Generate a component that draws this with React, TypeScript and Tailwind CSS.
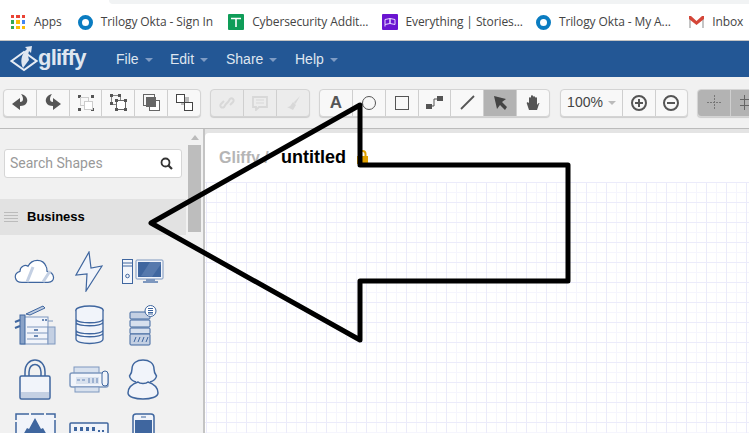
import type { ReactNode } from "react";

const ui = "font-['Liberation_Sans',Arial,sans-serif]";

function OktaRing() {
  return <span className="h-[15px] w-[15px] shrink-0 rounded-full border-[4px] border-[#0a7cc1] bg-white" />;
}

function Bookmark({ icon, label, width }: { icon: ReactNode; label: string; width: string }) {
  return (
    <div className={`flex items-center gap-[8px] ${width}`}>
      {icon}
      <span className="whitespace-nowrap text-[12px] tracking-[-0.1px] text-[#444]">{label}</span>
    </div>
  );
}

function AppsIcon() {
  const colors = ["#ea4335", "#ea4335", "#ea4335", "#34a853", "#fbbc05", "#4285f4", "#34a853", "#fbbc05", "#fbbc05"];
  return (
    <span className="mr-px grid h-[14px] w-[14px] shrink-0 grid-cols-3 gap-[2px]">
      {colors.map((c, i) => (
        <span key={i} style={{ backgroundColor: c }} />
      ))}
    </span>
  );
}

function BookmarksBar() {
  return (
    <div className="relative flex h-[41px] items-center border-b border-[#c4c4c4] bg-white pl-[11px] pt-[4px] font-['Open_Sans',sans-serif]">
      <div className="absolute right-0 top-0 h-[4px] w-[640px] rounded-bl-[8px] bg-[#f1f3f4]" />
      <Bookmark width="w-[67px]" icon={<AppsIcon />} label="Apps" />
      <Bookmark width="w-[151px]" icon={<OktaRing />} label="Trilogy Okta - Sign In" />
      <Bookmark
        width="w-[154px]"
        icon={
          <svg width="16" height="16" viewBox="0 0 16 16" className="shrink-0">
            <rect width="16" height="16" rx="1" fill="#0f9d58" />
            <path d="M3 4.500h10M8 4.500V13" stroke="#fff" strokeWidth="1.600" />
          </svg>
        }
        label="Cybersecurity Addit..."
      />
      <Bookmark
        width="w-[155px]"
        icon={
          <svg width="16" height="16" viewBox="0 0 16 16" className="shrink-0">
            <rect width="16" height="16" rx="1" fill="#6a14d1" />
            <path d="M3 5.500l5-1v5l-5 1zM8 4.500l5 1v5l-5-1zM3 10.500v2" fill="none" stroke="#e8d8ff" strokeWidth="1" />
          </svg>
        }
        label="Everything | Stories..."
      />
      <Bookmark width="w-[154px]" icon={<OktaRing />} label="Trilogy Okta - My A..." />
      <Bookmark
        width="w-[60px]"
        icon={
          <svg width="15" height="12" viewBox="0 0 15 12" className="shrink-0">
            <path d="M0 1h2v11H0zM13 1h2v11h-2z" fill="#c5c5c5" />
            <path d="M0 0h2l5.500 5L13 0h2v3L7.500 9 0 3z" fill="#d44638" />
          </svg>
        }
        label="Inbox"
      />
    </div>
  );
}

function MenuItem({ label, width }: { label: string; width: string }) {
  return (
    <div className={`flex items-center gap-[6px] ${width}`}>
      <span className="text-[14px] text-[#dfe6f0]">{label}</span>
      <span className="mt-[1px] h-0 w-0 border-x-[4px] border-t-[4px] border-x-transparent border-t-[#7f9cc4]" />
    </div>
  );
}

function BlueBar() {
  return (
    <div className={`flex h-[36px] items-center bg-[#235795] pl-[10px] ${ui}`}>
      <svg width="28" height="28" viewBox="0 0 28 28" className="mb-[2px] shrink-0">
        <path d="M1.500 17L14 8l12.500 9L14 26z" fill="#235795" stroke="#e6ecf4" strokeWidth="2" />
        <path d="M13 24c-3-6-2-14 4-19l-2-2 7-1-1 7-2-2c-1 3-1 6 0 9z" fill="#dfe6f0" />
      </svg>
      <span className="w-[78px] pb-[2px] text-[22px] font-bold leading-none tracking-[-0.8px] text-[#dfe6f0]">gliffy</span>
      <MenuItem width="w-[54px]" label="File" />
      <MenuItem width="w-[56px]" label="Edit" />
      <MenuItem width="w-[69px]" label="Share" />
      <MenuItem width="w-[60px]" label="Help" />
    </div>
  );
}

function ToolButton({ children, active, width = "flex-1" }: { children: ReactNode; active?: boolean; width?: string }) {
  return (
    <div
      className={`flex h-full items-center justify-center border-r border-[#cfcfcf] last:border-r-0 ${width} ${active ? "bg-[#b3b3b3]" : ""}`}
    >
      {children}
    </div>
  );
}

function ToolGroup({ children, dim, className = "" }: { children: ReactNode; dim?: boolean; className?: string }) {
  return (
    <div
      className={`flex h-[28px] shrink-0 overflow-hidden rounded-[4px] border border-[#d4d4d4] ${dim ? "bg-[#ececec]" : "bg-[#f8f8f8]"} shadow-[0_1px_1px_rgba(0,0,0,0.15)] ${className}`}
    >
      {children}
    </div>
  );
}

const ic = "#555";
const dimIc = "#d8d8d8";

function Toolbar() {
  return (
    <div className="relative z-10 flex h-[52px] items-center gap-[9px] overflow-hidden bg-[#f1f1f1] pb-[1px] pl-[3px] shadow-[inset_0_-1px_0_#bbb]">
      <ToolGroup className="w-[198px]">
        <ToolButton>
          <svg width="16" height="17" viewBox="0 0 16 17"><path d="M9 0c5 1 7 5 6 8-1 3-4 4-7 4v4L0 10l8-6v4c2 0 3-1 3-3 0-2-1-4-2-5z" fill={ic} /></svg>
        </ToolButton>
        <ToolButton>
          <svg width="16" height="17" viewBox="0 0 16 17"><path d="M7 0C2 1 0 5 1 8c1 3 4 4 7 4v4l8-6-8-6v4C6 8 5 7 5 5c0-2 1-4 2-5z" fill={ic} /></svg>
        </ToolButton>
        <ToolButton>
          <svg width="16" height="16" viewBox="0 0 16 16"><path d="M0 0h3v3H0zM13 0h3v3h-3zM0 13h3v3H0zM13 13h3v3h-3z" fill={ic} /><rect x="2.500" y="2.500" width="8" height="8" fill="none" stroke="#ccc" /><rect x="6.500" y="6.500" width="8" height="8" fill="#fff" stroke="#ccc" /></svg>
        </ToolButton>
        <ToolButton>
          <svg width="17" height="17" viewBox="0 0 17 17"><rect x="1.500" y="1.500" width="9" height="9" fill="none" stroke="#888" /><rect x="6.500" y="6.500" width="9" height="9" fill="#fff" stroke="#666" /><path d="M0 0h3v3H0zM8 0h3v3H8zM0 8h3v3H0zM5 5h3v3H5zM14 5h3v3h-3zM14 14h3v3h-3zM5 14h3v3H5z" fill={ic} /></svg>
        </ToolButton>
        <ToolButton>
          <svg width="17" height="17" viewBox="0 0 17 17"><rect x="0.500" y="0.500" width="11" height="11" fill="none" stroke="#666" /><rect x="6.500" y="6.500" width="10" height="10" fill="#fff" stroke="#666" /><rect x="3" y="3" width="10" height="10" fill="#666" /></svg>
        </ToolButton>
        <ToolButton>
          <svg width="17" height="17" viewBox="0 0 17 17"><rect x="5" y="3" width="8" height="8" fill="#bbb" /><rect x="9" y="3" width="4" height="6" fill="#bbb" /><rect x="0.500" y="0.500" width="8" height="8" fill="#fff" stroke="#444" /><rect x="8.500" y="8.500" width="8" height="8" fill="#fff" stroke="#444" /></svg>
        </ToolButton>
      </ToolGroup>
      <ToolGroup dim className="w-[100px]">
        <ToolButton>
          <svg width="16" height="16" viewBox="0 0 16 16"><path d="M7 9l-2 3a2 2 0 01-3-3l3-3M9 7l2-3a2 2 0 013 3l-3 3M6 10l4-4" stroke={dimIc} strokeWidth="2" fill="none" /></svg>
        </ToolButton>
        <ToolButton>
          <svg width="16" height="16" viewBox="0 0 16 16"><path d="M1 2h14v10H7l-3 3v-3H1z" fill="none" stroke={dimIc} strokeWidth="1.800" /><path d="M4 5h8M4 8h8" stroke={dimIc} /></svg>
        </ToolButton>
        <ToolButton>
          <svg width="16" height="16" viewBox="0 0 16 16"><path d="M15 1L9 7l1 2 1-1zM8 7l3 3-3 5-6-3c3 0 4-2 6-5z" fill={dimIc} /></svg>
        </ToolButton>
      </ToolGroup>
      <ToolGroup className="w-[231px]">
        <ToolButton>
          <span className={`text-[17px] font-bold leading-none text-[#555] ${ui}`}>A</span>
        </ToolButton>
        <ToolButton>
          <span className="h-[14px] w-[14px] rounded-full border-[1.5px] border-[#555]" />
        </ToolButton>
        <ToolButton>
          <span className="h-[14px] w-[14px] border-[1.5px] border-[#555]" />
        </ToolButton>
        <ToolButton>
          <svg width="17" height="13" viewBox="0 0 17 13"><path d="M0 8h6v5H0zM11 0h6v5h-6z" fill={ic} /><path d="M5 10h3V3h4" stroke={ic} fill="none" /></svg>
        </ToolButton>
        <ToolButton>
          <svg width="15" height="15" viewBox="0 0 15 15"><path d="M1 14L14 1" stroke={ic} strokeWidth="1.800" /></svg>
        </ToolButton>
        <ToolButton active>
          <svg width="13" height="14" viewBox="0 0 13 14"><path d="M0 0l12 3-4 3 5 5-2 3-5-5-3 4z" fill="#444" /></svg>
        </ToolButton>
        <ToolButton>
          <svg width="14" height="16" viewBox="0 0 14 16"><path d="M3 15L1 9c-1-2 1-2 2-1V3c0-1 2-1 2 0V1c0-1 2-1 2 0v1c0-1 2-1 2 0v1c0-1 2-1 2 0v7c2-3 3-2 2-1l-2 6z" fill={ic} /></svg>
        </ToolButton>
      </ToolGroup>
      <ToolGroup className="ml-px w-[128px]">
        <ToolButton width="w-[62px] shrink-0">
          <span className={`text-[14px] text-[#444] ${ui}`}>100%</span>
          <span className="ml-[5px] h-0 w-0 border-x-[4px] border-t-[4px] border-x-transparent border-t-[#bbb]" />
        </ToolButton>
        <ToolButton>
          <span className="relative h-[16px] w-[16px] rounded-full border-2 border-[#555]">
            <span className="absolute left-[2px] top-[5px] h-[2px] w-[8px] bg-[#555]" />
            <span className="absolute left-[5px] top-[2px] h-[8px] w-[2px] bg-[#555]" />
          </span>
        </ToolButton>
        <ToolButton>
          <span className="relative h-[16px] w-[16px] rounded-full border-2 border-[#555]">
            <span className="absolute left-[2px] top-[5px] h-[2px] w-[8px] bg-[#555]" />
          </span>
        </ToolButton>
      </ToolGroup>
      <ToolGroup className="border-[#b0b0b0] bg-[#b3b3b3]">
        <ToolButton active width="w-[33px]">
          <svg width="15" height="15" viewBox="0 0 15 15"><path d="M7.500 0v15M0 7.500h15" stroke="#777" strokeDasharray="2 1" /></svg>
        </ToolButton>
        <ToolButton active width="w-[33px]">
          <svg width="15" height="15" viewBox="0 0 15 15"><path d="M4.500 0v15M10.500 0v15M0 4.500h15M0 10.500h15" stroke="#666" /></svg>
        </ToolButton>
      </ToolGroup>
    </div>
  );
}

const blue = "#3f669f";
const lightFill = "#f1f4fa";
const s = { fill: lightFill, stroke: blue, strokeWidth: 1.2 };

const shapes: ReactNode[] = [
  <svg key="cloud" width="42" height="24" viewBox="0 0 42 24"><path d="M8 23.300c-8 0-9-9-2-11 0-5 5-7 8-5 4-8 15-8 18 0 1 1 1 3 1 5 8 1 9 11 1 11z" fill="#fff" stroke={blue} strokeWidth="1.200" /><path d="M13 23l6-15M29 23l7-11" stroke="#c4d0e3" strokeWidth="3" /></svg>,
  <svg key="bolt" width="28" height="41" viewBox="0 0 28 41"><path d="M14 1L1 24l11-1-1 17L27 15l-11 2z" {...s} /></svg>,
  <svg key="pc" width="42" height="25" viewBox="0 0 42 25"><rect x="0.500" y="0.500" width="10" height="24" fill="#f4f6fb" stroke={blue} /><circle cx="5.500" cy="17" r="1.800" fill="none" stroke={blue} /><path d="M1 4h9M1 7h9" stroke={blue} /><rect x="14" y="1" width="27" height="19" rx="1" fill={lightFill} stroke="#7e98bf" /><rect x="16" y="3" width="23" height="15" fill={blue} /><path d="M19 17l9-14h11v2l-9 13z" fill="#5679ad" /><path d="M24 20h9v2h3v2H21v-2h3z" fill="#7e98bf" /></svg>,
  <svg key="copier" width="42" height="40" viewBox="0 0 42 40"><path d="M12 9l17-8 2 2-15 7z" fill="#bfcde2" stroke={blue} /><rect x="7" y="12" width="27" height="27" fill={lightFill} stroke="#7e98bf" /><rect x="6" y="10" width="5" height="29" fill="#8aa3c8" stroke={blue} /><rect x="34" y="22" width="7" height="17" fill="#c4d0e3" stroke="#7e98bf" /><path d="M13 22h21M13 28h21M13 34h21M34 16h5" stroke="#7e98bf" /><path d="M28 15h2M31 15h2M20 25h4M20 31h4" stroke={blue} strokeWidth="1.500" /><path d="M1 17l5-2M1 23l5-2" stroke={blue} strokeWidth="2" /></svg>,
  <svg key="db" width="29" height="40" viewBox="0 0 29 40"><ellipse cx="14.500" cy="5" rx="13.500" ry="4" {...s} strokeWidth="1.500" /><path d="M1 5v29c0 6 27 6 27 0V5M1 14c0 5 27 5 27 0M1 17c0 5 27 5 27 0M1 25c0 5 27 5 27 0M1 28c0 5 27 5 27 0" fill={lightFill} stroke={blue} strokeWidth="1.300" /></svg>,
  <svg key="server" width="28" height="41" viewBox="0 0 28 41"><rect x="1" y="7" width="20" height="7" rx="1" fill="#c4d0e3" stroke={blue} /><rect x="1" y="15" width="20" height="7" rx="1" fill="#d8e1ee" stroke={blue} /><rect x="1" y="23" width="20" height="6" rx="1" fill="#d8e1ee" stroke={blue} /><rect x="1" y="29" width="20" height="11" rx="1" fill="#c4d0e3" stroke={blue} /><circle cx="21.500" cy="6" r="5.500" fill="#fff" stroke={blue} /><path d="M19 3.500h5M19 5.500h5M19 7.500h5M19 9h5M5 37l2-5M9 37l2-5M13 37l2-5M17 37l2-5" stroke={blue} /></svg>,
  <svg key="lock" width="32" height="41" viewBox="0 0 32 41"><path d="M6 17V13C6 -3 26 -3 26 13v4M10 17V13c0-10 12-10 12 0v4" fill="none" stroke={blue} strokeWidth="1.500" /><rect x="1" y="17" width="30" height="23" rx="1.500" fill={lightFill} stroke={blue} strokeWidth="1.500" /><rect x="2" y="33" width="28" height="6" fill="#c4d0e3" /></svg>,
  <svg key="fax" width="41" height="27" viewBox="0 0 41 27"><rect x="5" y="1" width="25" height="7" fill="#d8e1ee" stroke="#7e98bf" /><rect x="1" y="7" width="38" height="14" rx="2" fill={lightFill} stroke="#7e98bf" strokeWidth="1.500" /><rect x="6" y="21" width="24" height="5" fill="#d8e1ee" stroke="#7e98bf" /><rect x="33" y="5" width="6" height="15" rx="3" fill={lightFill} stroke={blue} /><path d="M7 11h23v7H7z" fill="#d8e1ee" /><path d="M8 14h3M13 14h3M20 12v5M24 12v5M28 12v5" stroke="#8aa3c8" strokeWidth="1.500" /></svg>,
  <svg key="user" width="32" height="41" viewBox="0 0 32 41"><path d="M9 23C6 22 3 20 2.500 17 5 14 5 11 5 10 5 4 10 1 16 1s11 3 11 9c0 1 0 4 2.500 7-.5 3-3.500 5-6.500 6" {...s} strokeWidth="1.500" /><path d="M1 34c0-6 4-9 10-11 2 2 8 2 10 0 6 2 10 5 10 11 0 8-30 8-30 0z" {...s} strokeWidth="1.500" /></svg>,
  <svg key="stamp" width="41" height="40" viewBox="0 0 41 40"><path d="M1 1h39v39H1z" fill={lightFill} stroke={blue} strokeWidth="1.500" strokeDasharray="13 2" /><path d="M8 22l4-7 2 1 6-11 6 11 2-1 4 7v18H8z" fill={blue} /></svg>,
  <svg key="patch" width="40" height="30" viewBox="0 0 40 30"><rect x="1" y="5" width="38" height="25" rx="1" fill={lightFill} stroke={blue} strokeWidth="1.500" /><path d="M5 9h3v4H5zM11 9h3v4h-3zM17 9h3v4h-3zM23 9h3v4h-3zM29 12h2v2h-2zM33 12h2v2h-2z" fill={blue} /></svg>,
  <svg key="phone" width="23" height="40" viewBox="0 0 23 40"><rect x="1" y="1" width="21" height="39" rx="3" fill={lightFill} stroke={blue} strokeWidth="1.500" /><rect x="3" y="7" width="17" height="30" fill={blue} /><path d="M9 4h5" stroke={blue} /></svg>,
];

function Sidebar() {
  return (
    <aside className={`flex w-[205px] shrink-0 overflow-hidden border-r-2 border-[#c4c4c4] bg-[#f1f1f1] ${ui}`}>
      <div className="w-[188px] shrink-0">
        <div className="mx-[4px] mt-[20px] flex h-[29px] w-[178px] items-center justify-between rounded-[3px] border border-[#d6d6d6] bg-white pl-[5px] pr-[8px]">
          <span className="font-['Roboto',sans-serif] text-[14px] text-[#999]">Search Shapes</span>
          <svg width="13" height="13" viewBox="0 0 13 13">
            <circle cx="5.500" cy="5.500" r="4" fill="none" stroke="#333" strokeWidth="1.800" />
            <path d="M8.500 8.500L12 12" stroke="#333" strokeWidth="2.200" />
          </svg>
        </div>
        <div className="mr-[2px] mt-[21px] flex h-[36px] items-center gap-[9px] bg-[#e2e2e2] pl-[4px]">
          <span className="flex w-[14px] flex-col gap-[2px]">
            <span className="h-px bg-[#bbb]" />
            <span className="h-px bg-[#bbb]" />
            <span className="h-px bg-[#bbb]" />
            <span className="h-px bg-[#bbb]" />
          </span>
          <span className="text-[13px] font-bold text-black">Business</span>
        </div>
        <div className="mt-[9px] grid grid-cols-[repeat(3,54px)] auto-rows-[54px] pl-[8px]">
          {shapes.map((shape, i) => (
            <div key={i} className="flex h-[54px] items-center justify-center">
              {shape}
            </div>
          ))}
        </div>
      </div>
      <div className="flex w-[13px] shrink-0 flex-col items-center pt-[6px]">
        <span className="h-0 w-0 border-x-[4px] border-b-[5px] border-x-transparent border-b-[#bbb]" />
        <div className="mt-[5px] h-[87px] w-[13px] bg-[#bdbdbd]" />
      </div>
    </aside>
  );
}

function Canvas() {
  return (
    <main className={`min-w-0 flex-1 bg-[#e4e4e4] pt-[4px] ${ui}`}>
      <div className="h-full overflow-hidden rounded-tl-[4px] bg-white">
        <div className="flex h-[49px] items-center pl-[14px] font-bold">
          <span className="w-[62px] text-[16px] text-[#b5b5b5]">Gliffy /</span>
          <span className="text-[18px] text-black">untitled</span>
          <svg width="13" height="15" viewBox="0 0 13 15" className="ml-[10px] mb-[1px]">
            <path d="M3.500 6V4a3 3 0 016 0v2" fill="none" stroke="#e0a000" strokeWidth="2" />
            <rect x="1" y="6" width="11" height="8" fill="#e0a000" />
          </svg>
        </div>
        <div className="h-full bg-[linear-gradient(#ebebfa_1px,transparent_1px),linear-gradient(90deg,#ebebfa_1px,transparent_1px),linear-gradient(#f5f5fd_1px,transparent_1px),linear-gradient(90deg,#f5f5fd_1px,transparent_1px)] bg-[size:20px_20px,20px_20px,10px_10px,10px_10px] bg-[position:1px_0,1px_0,1px_0,1px_0]" />
      </div>
    </main>
  );
}

export default function App() {
  return (
    <div className="relative h-[440px] w-[749px] overflow-hidden bg-white">
      <BookmarksBar />
      <BlueBar />
      <Toolbar />
      <div className="flex h-[304px] overflow-hidden">
        <Sidebar />
        <Canvas />
      </div>
      {/* arrow scribbled over the screenshot */}
      <svg width="749" height="440" viewBox="0 0 749 440" className="pointer-events-none absolute left-0 top-0 z-20">
        <path d="M360 105V165H568V281H360V340L151 223z" fill="none" stroke="#000" strokeWidth="5" strokeLinejoin="round" />
      </svg>
    </div>
  );
}
